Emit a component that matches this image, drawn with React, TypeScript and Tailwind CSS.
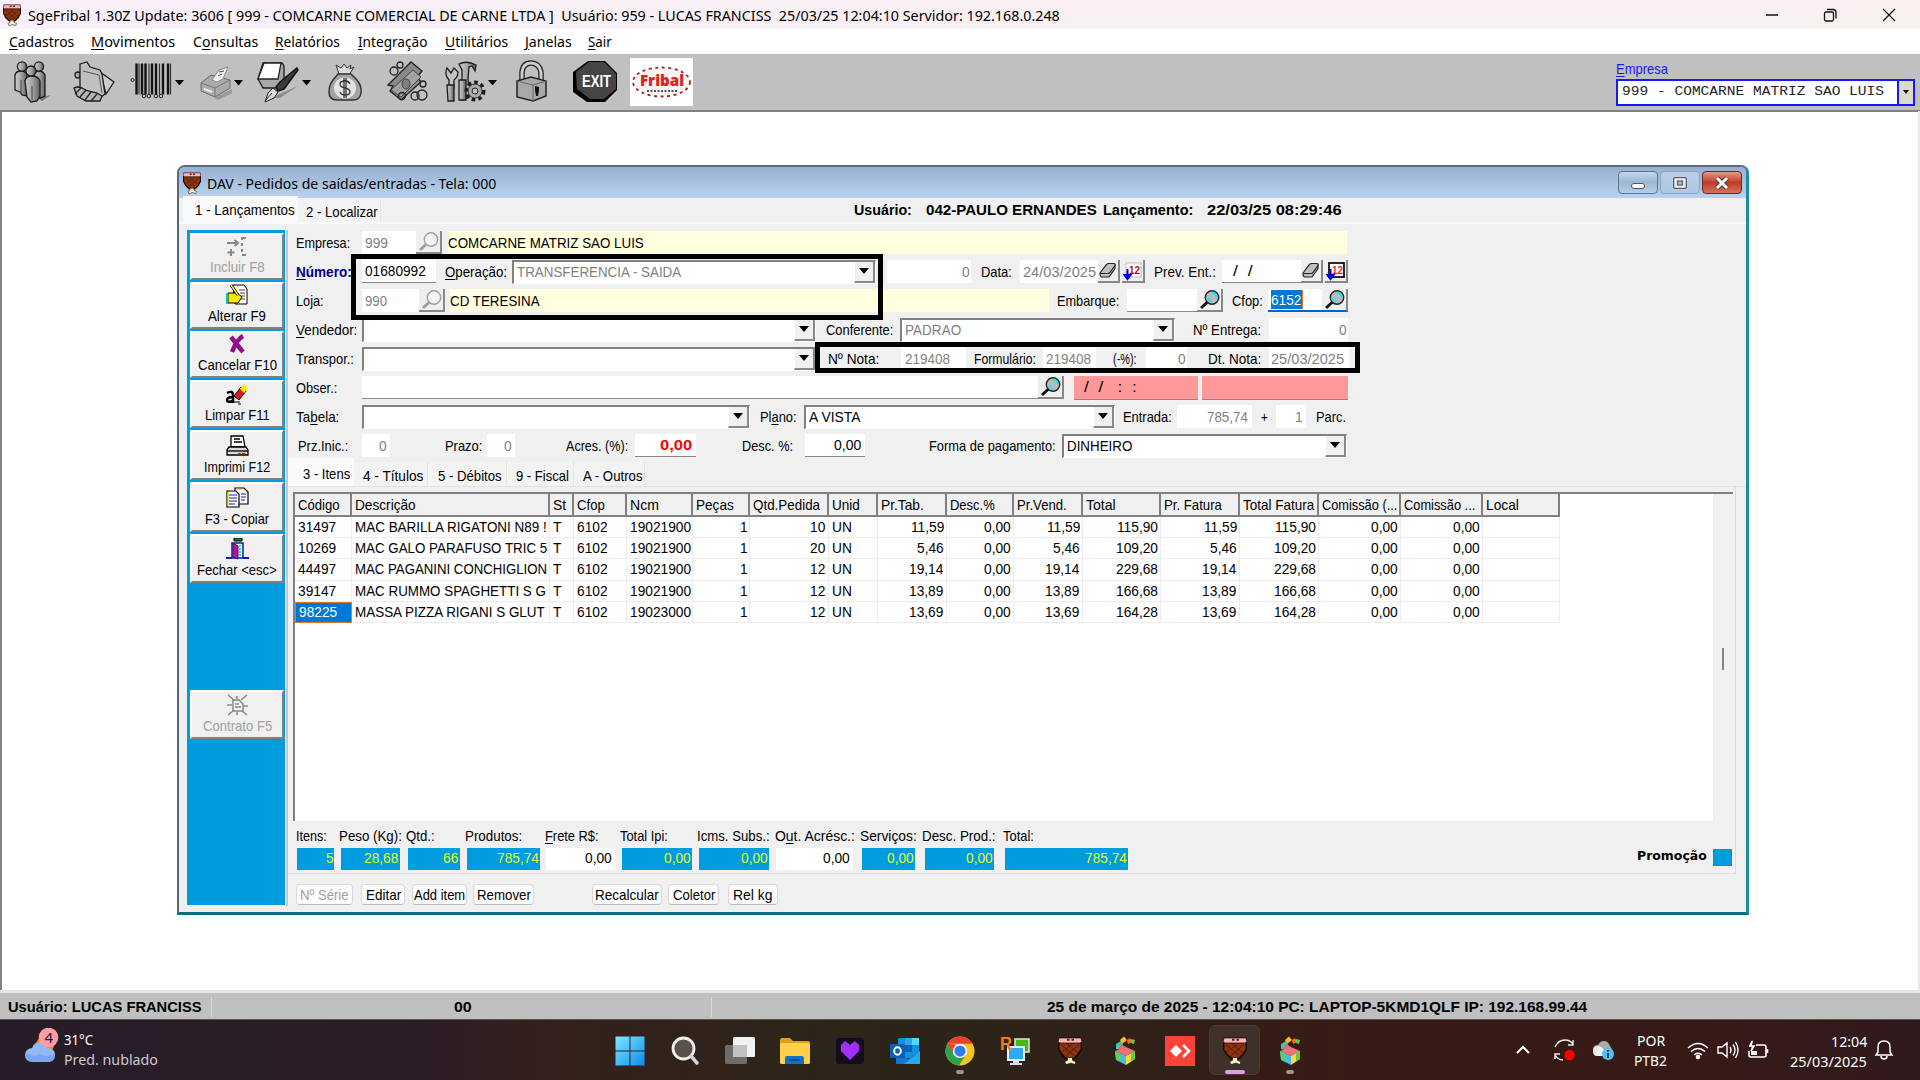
import React, { useLayoutEffect, useRef, useState } from 'react';

type TProps = { w?: number; k?: number; className?: string; children: React.ReactNode };

/** Text condensed horizontally to a target width, like the bitmap UI fonts. */
function T({ w, k = 0.915, className = '', children }: TProps) {
  const ref = useRef<HTMLSpanElement>(null);
  const [m, setM] = useState({ s: k, t: w });
  useLayoutEffect(() => {
    const nat = ref.current ? ref.current.offsetWidth : 0;
    if (nat > 0) {
      const target = w ?? nat * k;
      setM({ s: target / nat, t: target });
    }
  }, [w, k, children]);
  return (
    <span className={'inline-block shrink-0 whitespace-pre ' + className} style={{ width: m.t }}>
      <span ref={ref} className="inline-block origin-left" style={{ transform: `scaleX(${m.s})` }}>
        {children}
      </span>
    </span>
  );
}

const U = ({ children }: { children: React.ReactNode }) => <span className="underline underline-offset-2">{children}</span>;

const L = ({ w, className = '', children }: { w: number; className?: string; children: React.ReactNode }) => (
  <div className={'flex h-full items-center pt-px ' + className}>
    <T w={w}>{children}</T>
  </div>
);

function Field({ className = '', children }: { className?: string; children?: React.ReactNode }) {
  return <div className={'flex h-[23px] items-center bg-white ' + className}>{children}</div>;
}

function Arrow() {
  return (
    <svg width="10" height="6" viewBox="0 0 10 6">
      <path d="M0 0h10L5 6z" fill="#000" />
    </svg>
  );
}

function Combo({ className = '', children }: { className?: string; children?: React.ReactNode }) {
  return (
    <div className={'flex h-6 items-center border-t-2 border-l-2 border-t-[#808080] border-l-[#808080] border-r border-b border-r-white border-b-white bg-white pl-[3px] ' + className}>
      {children}
      <div className="ml-auto flex h-full w-[21px] items-center justify-center border-r-2 border-b-2 border-l border-[#888] border-l-white bg-[#f0f0f0]">
        <Arrow />
      </div>
    </div>
  );
}

function Lens({ off = false, className = '' }: { off?: boolean; className?: string }) {
  return (
    <div className={'flex h-[23px] w-[26px] items-center justify-center border-r-2 border-b-2 border-[#888] bg-[#efefef] ' + className}>
      <svg width="22" height="21" viewBox="0 0 22 21">
        <path d="M9.500 13L3 19" stroke={off ? '#a0a0a0' : '#111'} strokeWidth="3" />
        <circle cx="14" cy="8.500" r="6.700" fill={off ? '#f4f4f4' : '#b8bcbc'} stroke={off ? '#a0a0a0' : '#222'} strokeWidth="1.400" />
        {!off && <path d="M14 3.500a5 5 0 0 1 4.500 4.500M10 9l3 4" stroke="#00f0ff" strokeWidth="2" fill="none" />}
      </svg>
    </div>
  );
}

function Eraser() {
  return (
    <div className="flex h-[23px] w-[22px] items-center justify-center border-r-2 border-b-2 border-[#888] bg-[#efefef]">
      <svg width="18" height="17" viewBox="0 0 18 17">
        <path d="M1 11L7.500 2.500q1-1 2 -1h5q2.500 0 1.500 2.500v2.500l-6 8.500H3q-2 0-2-4z" fill="#c0c0c0" stroke="#222" strokeWidth="1.200" />
        <path d="M1.500 11.500h7.500q1.500 0 2-1l5-7" fill="none" stroke="#222" strokeWidth="1.200" />
      </svg>
    </div>
  );
}

function Cal({ hot = false }: { hot?: boolean }) {
  return (
    <div className="flex h-[23px] w-[23px] items-center justify-center border-r-2 border-b-2 border-[#888] bg-[#efefef]">
      <svg width="20" height="20" viewBox="0 0 20 20">
        <rect x="3" y="2" width="15" height="14" fill="#fff" stroke={hot ? '#111' : '#bbb'} strokeWidth={hot ? 1.8 : 1} />
        <text x="6" y="12.500" fontFamily="Liberation Sans" fontWeight="bold" fontSize="11" fill={hot ? '#f22' : '#a01818'} textLength="11" lengthAdjust="spacingAndGlyphs">12</text>
        <path d="M4.500 8v8M1.500 14h6l-3 4z" stroke="#0000d0" strokeWidth="2" fill="#0000d0" />
      </svg>
    </div>
  );
}

function Drumstick({ className = '' }: { className?: string }) {
  return (
    <svg className={className} viewBox="0 0 24 30" preserveAspectRatio="none">
      <path d="M0 4h24v9l-3 6-5 5H8l-5-5-3-6z" fill="#160804" />
      <path d="M1.500 6h21v7l-3 5-4.500 4.500H9L4.500 18l-3-5z" fill="#8c3412" />
      <path d="M3 8l13 12M8 6l12 11M21 8L8 20M16 6L4 16" stroke="#541a08" strokeWidth="1" />
      <path d="M1 1h22l1 4-2 1.500H2L0 5z" fill="#fbb5b5" stroke="#160804" strokeWidth=".8" />
      <path d="M9 3h2.500M13.500 3H16" stroke="#5a1818" strokeWidth="2" />
      <path d="M9.500 22h5v3l3.500 1.500-1 3-4-1.500-5 1.500-1.500-3L9.500 25z" fill="#fff3c8" stroke="#160804" strokeWidth=".7" />
    </svg>
  );
}

function Cubes() {
  return (
    <svg width="24" height="30" viewBox="0 0 24 30" preserveAspectRatio="none">
      <path d="M7 4l4-3.500 3 3.500-5 4z" fill="#f3c11b" />
      <path d="M14 4l3-2 2 4-4 2z" fill="#ff6a1a" />
      <path d="M18 3l4 1-1 4-3-1z" fill="#5acb3c" />
      <path d="M3 8l5-3 2 4-3 5-4-1z" fill="#3cc5b4" />
      <path d="M8 8l5 3-3 3-5-1z" fill="#f06a60" />
      <path d="M13 11l9 4-9 5-11-5z" fill="#ee7078" />
      <path d="M2 15l11 5v9L3 24z" fill="#4db8f0" />
      <path d="M2 15l6 3v7l-5-2z" fill="#5bd060" />
      <path d="M13 20l9-5v8l-9 6z" fill="#f7dc3e" />
      <path d="M18 17.500l4-2.500v8l-4 2.500z" fill="#62cc40" />
    </svg>
  );
}

const g = { fill: 'url(#steel)', stroke: '#1c1c1c', strokeWidth: 1.3 };

function Steel() {
  return (
    <defs>
      <linearGradient id="steel">
        <stop stopColor="#cfcfcf" />
        <stop offset=".5" stopColor="#a4a4a4" />
        <stop offset="1" stopColor="#5f5f5f" />
      </linearGradient>
    </defs>
  );
}

function TopIcon({ name }: { name: string }) {
  switch (name) {
    case 'people':
      return (
        <svg width="44" height="44" viewBox="0 0 44 44">
          <Steel />
          <path d="M28 38l13-3-9 6z" fill="#777" />
          <path d="M5 15q1-4 6-4t6 4v21l-5-1-2-3-5-2z" {...g} />
          <path d="M24 15q1-4 5-4t6 4v21l-5 2z" {...g} />
          <path d="M15 21q1-5 7-5t8 5v15l-3 5-6 1-4-5z" {...g} />
          <path d="M22 26v14M11 20v14" stroke="#444" />
          <circle cx="12" cy="6.500" r="4.600" {...g} />
          <circle cx="29" cy="6.500" r="4.600" {...g} />
          <circle cx="21" cy="11" r="5" {...g} />
        </svg>
      );
    case 'folder':
      return (
        <svg width="44" height="44" viewBox="0 0 44 44">
          <circle cx="6" cy="15" r="3" {...g} />
          <path d="M28 12l14 10-8 12z" {...g} fill="#ccc" />
          <path d="M8 4l7-2 3 5 10 3 2 4 3 20-4 3-21-6z" {...g} fill="#c0c0c0" />
          <path d="M11 11l16 4 3 18" fill="none" stroke="#555" />
          <path d="M2 28q4-2 8 0l6 3 9 2 5 3-2 5H14l-9-5z" {...g} fill="#b4b4b4" />
          <path d="M9 28l-6 6M14 30l-6 7M19 32l-6 8M25 34l-6 7" stroke="#222" strokeWidth="1.300" />
        </svg>
      );
    case 'barcode':
      return (
        <svg width="56" height="44" viewBox="0 0 56 44">
          <g transform="translate(1 0)">
            <path d="M5.500 3.500v31M11 3.500v31M14.500 3.500v31M21 3.500v31M25 3.500v31M32 3.500v31M37 3.500v31" stroke="#111" strokeWidth="2.400" />
            <path d="M8 3.500v31M18 3.500v31M28.500 3.500v31M39.500 3.500v31" stroke="#333" strokeWidth="1.200" />
            <g fill="#c0c0c0" stroke="#222">
              <circle cx="1.500" cy="20" r="1.500" />
              <circle cx="13" cy="36" r="1.800" />
              <circle cx="18" cy="36" r="1.800" />
              <circle cx="25" cy="36" r="1.800" />
              <circle cx="30" cy="36" r="1.800" />
            </g>
            <path d="M44 20h9l-4.500 5.500z" />
          </g>
        </svg>
      );
    case 'printer':
      return (
        <svg width="48" height="44" viewBox="0 0 48 44">
          <path d="M16 38l18-9v4l-14 7z" fill="#999" />
          <path d="M3 23l10-8 19 5v8L17 37 3 31z" fill="#ababab" stroke="#6a6a6a" />
          <path d="M3 23l14 5 15-8M17 28v9" fill="none" stroke="#777" />
          <path d="M6 29l8 3" stroke="#eee" strokeWidth="2" />
          <path d="M14 20l7-10 9-3-5 12-6 3z" fill="#eee" stroke="#888" />
          <path d="M21 12l5-1M20 16l4-2" stroke="#555" />
          <path d="M36 20h9l-4.500 5.500z" />
        </svg>
      );
    case 'pen':
      return (
        <svg width="56" height="44" viewBox="0 0 56 44">
          <path d="M14 38l28-12-18 12z" fill="#8c8c8c" />
          <path d="M2 19l5-16h19l2 3v14l-7 8H7z" fill="#a8a8a8" stroke="#1c1c1c" strokeWidth="1.300" />
          <path d="M2 19L8 3h17l-3 16z" fill="#fff" stroke="#222" strokeWidth="1.300" />
          <path d="M41 8l1 2-14 19-6 2-2-4 4-5z" fill="#3a3a3a" stroke="#111" strokeWidth="1.500" />
          <path d="M17 28l5 4-4 6-9 4 3-9z" fill="#ddd" stroke="#222" />
          <path d="M9 41l7-8" stroke="#222" />
          <path d="M46 20h9l-4.500 5.500z" />
        </svg>
      );
    case 'bag':
      return (
        <svg width="44" height="44" viewBox="0 0 44 44">
          <path d="M15 14L12 5l5 3 3-4 3 4 4-3-1 4 4-2-5 8z" fill="#ddd" stroke="#333" />
          <path d="M14 14h13l6 6q5 6 4 13-1 7-8 7H13q-8 0-8-8 0-7 4-12z" fill="#a4a4a4" stroke="#333" strokeWidth="1.500" />
          <ellipse cx="21" cy="28" rx="11" ry="10.500" fill="#e4e4e4" />
          <path d="M26 24q-1-3-5-3-5 0-5 3t5 4q5 1 5 4t-5 3q-4 0-5-3M20 18v20M22 18v20" fill="none" stroke="#333" strokeWidth="1.300" />
        </svg>
      );
    case 'cash':
      return (
        <svg width="44" height="44" viewBox="0 0 44 44">
          <path d="M2 25L25 2l11 9-5 6 4 5-20 18-11-9 3-5z" fill="#8a8a8a" stroke="#222" strokeWidth="1.300" />
          <path d="M5 30l22-20 8 7-20 20z" fill="#a4a4a4" stroke="#444" />
          <path d="M10 31L29 14" stroke="#777" strokeDasharray="2 2" />
          <ellipse cx="20" cy="24" rx="4" ry="5" fill="#808080" stroke="#444" />
          <g fill="none" stroke="#222" strokeWidth="1.300">
            <circle cx="8" cy="11" r="4" />
            <circle cx="14" cy="5" r="3" />
            <circle cx="37" cy="24" r="3" />
            <circle cx="16" cy="36" r="3.500" />
            <circle cx="29" cy="36" r="4" />
            <circle cx="36" cy="35" r="5" />
          </g>
        </svg>
      );
    case 'tools':
      return (
        <svg width="56" height="44" viewBox="0 0 56 44">
          <path d="M15 4q8-4 17 1l-1 6-3-5-3 1-1 12 2 18-8 3V10z" {...g} />
          <path d="M15 20h7v20h-7z" {...g} />
          <path d="M3 8l4 5 3-5 4 4q0 5-4 8v8H5v-8Q0 15 3 8z" {...g} fill="#c4c4c4" />
          <path d="M3 25h7v16H4z" {...g} />
          <circle cx="31" cy="31" r="8.500" fill="#bbb" stroke="#1c1c1c" strokeWidth="4" strokeDasharray="3.500 3" />
          <circle cx="31" cy="31" r="7" fill="#aaa" stroke="#333" />
          <circle cx="31" cy="31" r="3" fill="#c0c0c0" stroke="#222" />
          <path d="M44 20h9l-4.500 5.500z" />
        </svg>
      );
    case 'lock':
      return (
        <svg width="44" height="44" viewBox="0 0 44 44">
          <path d="M10 21v-9Q11 3 19 3t10 9v10" fill="none" stroke="#222" strokeWidth="5.500" />
          <path d="M10 21v-9Q11 3 19 3t10 9v10" fill="none" stroke="#ccc" strokeWidth="3" />
          <path d="M5 21l14-4 15 4v15l-13 5-16-4z" fill="#a8a8a8" stroke="#222" strokeWidth="1.500" />
          <path d="M5 21l16 4 13-4M21 25v16" fill="none" stroke="#666" />
          <path d="M23 26l4 1v3l-1 6h-2l-1-6z" fill="#111" />
        </svg>
      );
    case 'exit':
      return (
        <svg className="overflow-visible" width="50" height="44" viewBox="0 0 50 44">
          <path d="M3 12L18 1h17l12 12v17L35 42H17L3 32z" fill="#000" />
          <path d="M6 12L19 2h15l12 12v15L34 39H20L7 29z" fill="#454545" />
          <text x="12" y="27" fontFamily="Liberation Sans" fontWeight="bold" fontSize="17" fill="#fff" textLength="29" lengthAdjust="spacingAndGlyphs">EXIT</text>
        </svg>
      );
    default:
      return (
        <svg width="63" height="48" viewBox="0 0 63 48">
          <rect width="63" height="48" fill="#fff" />
          <ellipse cx="31.500" cy="24" rx="28.500" ry="14.500" fill="#fbf4f2" stroke="#9a2a22" strokeWidth="1.800" strokeDasharray="3 3.500" />
          <text x="10" y="28" fontFamily="Open Sans" fontWeight="800" fontSize="16" fill="#e02020" textLength="44" lengthAdjust="spacingAndGlyphs">Fribal</text>
          <path d="M17 33h30" stroke="#222" strokeWidth="1.300" strokeDasharray="2 1.500" />
        </svg>
      );
  }
}

function SideIcon({ name }: { name: string }) {
  const c = '#888';
  return (
    <svg width="24" height="22" viewBox="0 0 24 22">
      {name === 'incluir' && (
        <g stroke={c} strokeWidth="2" fill="none">
          <path d="M2 8h11M9.500 5l3.500 3-3.500 3M6 14v7M2.500 17.500h7" />
          <path d="M17 2v3M17 8v3M17 14v3M17 20h4M17 3h4" />
        </g>
      )}
      {name === 'alterar' && (
        <g>
          <path d="M8 1h11l3 4v15H10z" fill="#fff" stroke="#000" />
          <path d="M14 6h6M15 9h5M16 12h4M16 15h4" stroke="#444" />
          <path d="M3 9h9l5 4-4 6H3z" fill="#ffe800" stroke="#000" />
          <path d="M1 9h2v11H1z" fill="#0cc" />
          <path d="M6 1l7 10" stroke="#000" strokeWidth="3" />
          <path d="M6 1l7 10" stroke="#ff0" strokeWidth="1.400" />
        </g>
      )}
      {name === 'cancelar' && <path d="M6 4l12 15M18 3Q12 6 7 19" stroke="#90108c" strokeWidth="4.500" fill="none" />}
      {name === 'limpar' && (
        <g>
          <path d="M2 10q6-3 6 2v8M8 14q-6 0-6 3t6 1" fill="none" stroke="#000" strokeWidth="2.500" />
          <path d="M9 19h6M13 21h3" stroke="#000" />
          <path d="M9 13l7-9 5 4-7 9z" fill="#e01818" stroke="#000" />
          <path d="M15 6l4-5 4 4-4 5z" fill="#ffe600" />
        </g>
      )}
      {name === 'imprimir' && (
        <g stroke="#000" strokeWidth="1.300">
          <path d="M6 1h12l2 11H6z" fill="#fff" />
          <path d="M9 4h6M9 7h8" />
          <path d="M4 12h17l2 3v5H2v-5z" fill="#d8d8d8" />
          <path d="M2 16h21" />
          <path d="M13 18.500h3" stroke="#0a0" />
          <path d="M17 18.500h3" stroke="#e00" />
        </g>
      )}
      {name === 'copiar' && (
        <g stroke="#000" strokeWidth="1.200">
          <path d="M10 1h9l4 4v12H10z" fill="#fff" />
          <path d="M2 4h9l3 3v13H2z" fill="#fff" />
          <path d="M4 8h8M4 11h8M4 14h8M4 17h6M16 7h5M16 10h5M16 13h4" stroke="#1818a0" />
          <path d="M3 5v14M11 2l6 1" stroke="#e8d800" />
        </g>
      )}
      {name === 'fechar' && (
        <g>
          <path d="M9 0h8v3H9z" fill="#0a8a0a" stroke="#000" />
          <path d="M7 5h11v15H7z" fill="#eaffff" stroke="#1818a0" strokeWidth="1.500" />
          <path d="M8 5l5 3v13l-5-2z" fill="#c0108c" stroke="#202080" />
          <path d="M1 20h6M18 20h6" stroke="#1818a0" strokeWidth="2" />
          <path d="M15 7v11" stroke="#30e0e8" strokeWidth="2" strokeDasharray="2 1" />
        </g>
      )}
      {name === 'contrato' && (
        <g stroke={c} strokeWidth="1.500" fill="none">
          <path d="M8 6h6l4 4v7H8zM10 10h4M10 13h6" />
          <path d="M3 1l6 5M22 1l-6 5M2 11h5M18 12h5M3 21l5-4M22 21l-5-4M12 2v3M12 18v3" />
        </g>
      )}
    </svg>
  );
}

function SideButton({ icon, label, w, off = false, className = 'h-[49px]' }: { icon: string; label: string; w: number; off?: boolean; className?: string }) {
  return (
    <div className={'flex w-[94px] shrink-0 flex-col items-center justify-end border-t-2 border-l-2 border-r-2 border-b-2 border-t-white border-l-white border-r-[#808080] border-b-[#808080] bg-[#f0f0f0] ' + className + (off ? ' text-[#a0a0a0]' : '')}>
      <SideIcon name={icon} />
      <T w={w} className="h-[21px] leading-[19px]">{label}</T>
    </div>
  );
}

const columns: [string, number][] = [
  ['Código', 42], ['Descrição', 61], ['St', 13], ['Cfop', 28], ['Ncm', 29], ['Peças', 38], ['Qtd.Pedida', 67], ['Unid', 28],
  ['Pr.Tab.', 43], ['Desc.%', 45], ['Pr.Vend.', 50], ['Total', 30], ['Pr. Fatura', 58], ['Total Fatura', 71], ['Comissão (...', 75], ['Comissão ...', 71], ['Local', 33],
];
const rows = [
  ['31497', 'MAC BARILLA RIGATONI N89 !', 'T', '6102', '19021900', '1', '10', 'UN', '11,59', '0,00', '11,59', '115,90', '11,59', '115,90', '0,00', '0,00', ''],
  ['10269', 'MAC GALO PARAFUSO TRIC 5', 'T', '6102', '19021900', '1', '20', 'UN', '5,46', '0,00', '5,46', '109,20', '5,46', '109,20', '0,00', '0,00', ''],
  ['44497', 'MAC PAGANINI CONCHIGLION', 'T', '6102', '19021900', '1', '12', 'UN', '19,14', '0,00', '19,14', '229,68', '19,14', '229,68', '0,00', '0,00', ''],
  ['39147', 'MAC RUMMO SPAGHETTI S G', 'T', '6102', '19021900', '1', '12', 'UN', '13,89', '0,00', '13,89', '166,68', '13,89', '166,68', '0,00', '0,00', ''],
  ['98225', 'MASSA PIZZA RIGANI S GLUT', 'T', '6102', '19023000', '1', '12', 'UN', '13,69', '0,00', '13,69', '164,28', '13,69', '164,28', '0,00', '0,00', ''],
];
const descWidths = [192, 192, 192, 191, 190];
const grid = 'grid grid-cols-[57px_198px_24px_53px_66px_57px_79px_49px_69px_67px_69px_78px_79px_79px_82px_82px_77px]';

function Table() {
  return (
    <div className="ml-[5px] flex h-[329px] w-[1440px] border-t-2 border-l-2 border-[#808080] bg-white">
      <div className="w-[1418px]">
        <div className={grid + ' h-[23px]'}>
          {columns.map(([c, w], i) => (
            <div key={i} className="flex items-center overflow-hidden border-r-2 border-b-2 border-[#808080] bg-[#f0f0f0] pl-[3px]">
              <T w={w}>{c}</T>
            </div>
          ))}
        </div>
        {rows.map((r, j) => (
          <div key={j} className={grid + ' h-[21.2px]'}>
            {r.map((v, i) => {
              const num = i === 5 || i === 6 || (i > 7 && i < 16);
              const sel = j === 4 && i === 0;
              return (
                <div key={i} className={'flex items-center overflow-hidden border-r border-b ' + (num ? 'justify-end pr-0.5 ' : 'pl-[3px] ') + (sel ? 'border border-[#e07828] bg-[#0078d7] pl-0.5 text-white' : 'border-[#ececec]')}>
                  {v && <T w={i === 1 ? descWidths[j] : undefined}>{v}</T>}
                </div>
              );
            })}
          </div>
        ))}
      </div>
      <div className="w-5 bg-[#f0f0f0] pt-[154px] pl-[9px]">
        <div className="h-[22px] w-0.5 bg-[#858585]" />
      </div>
    </div>
  );
}

function Total({ label, w, value, plain = false, cell, box }: { label: React.ReactNode; w: number; value: string; plain?: boolean; cell: string; box: string }) {
  return (
    <div className={'shrink-0 ' + cell}>
      <div className="flex h-6 items-center"><T w={w}>{label}</T></div>
      <div className={'flex h-[22px] items-center justify-end pb-0.5 ' + box + (plain ? ' bg-white pr-[3px]' : ' bg-[#009ce0] pr-px text-[#e4ff1c]')}>
        <T>{value}</T>
      </div>
    </div>
  );
}

function PushButton({ w, className, children }: { w: number; className: string; children: string }) {
  return (
    <div className={'flex h-[21px] shrink-0 items-center justify-center overflow-hidden rounded border border-[#d8d8d8] border-b-[#bbb] bg-[#fdfdfd] ' + className}>
      <T w={w}>{children}</T>
    </div>
  );
}

function Tab({ w, className, children }: { w: number; className: string; children: string }) {
  return (
    <div className={'flex shrink-0 items-center justify-end ' + className}>
      <T w={w}>{children}</T>
    </div>
  );
}

function Form() {
  return (
    <div className="relative flex h-[229px] w-[1080px] flex-col gap-1 pl-2">
      <div className="grid h-[25px] grid-cols-[66px_54px_32px_899px] items-center">
        <L w={54}>Empresa:</L>
        <Field className="pl-[3px] text-[#808080]"><T w={23}>999</T></Field>
        <Lens off />
        <div className="flex h-[23px] items-center bg-[#ffffe0]"><T w={196}>COMCARNE MATRIZ SAO LUIS</T></div>
      </div>
      <div className="grid h-[25px] grid-cols-[66px_83px_67px_375px_84px_49px_78px_24px_32px_68px_79px_24px_23px] items-center">
        <L w={56} className="font-bold text-[#000080]"><U>N</U>úmero:</L>
        <Field className="mr-[9px] border-b border-[#888] pl-[3px]"><T w={61}>01680992</T></Field>
        <L w={62}><U>O</U>peração:</L>
        <Combo className="mr-[11px] text-[#808080]"><T w={164}>TRANSFERENCIA - SAIDA</T></Combo>
        <Field className="justify-end pr-0.5 text-[#808080]"><T>0</T></Field>
        <L w={31} className="pl-2.5">Data:</L>
        <Field className="pl-[3px] text-[#808080]"><T w={73}>24/03/2025</T></Field>
        <Eraser />
        <Cal />
        <L w={62}>Prev. Ent.:</L>
        <Field className="border-b border-[#888] pl-[11px]"><T w={20}>/  /</T></Field>
        <Eraser />
        <Cal hot />
      </div>
      <div className="grid h-[25px] grid-cols-[66px_57px_31px_599px_78px_70px_35px_36px_54px_26px] items-center">
        <L w={28}>Loja:</L>
        <Field className="pl-[3px] text-[#808080]"><T w={22}>990</T></Field>
        <Lens off />
        <div className="flex h-[23px] items-center bg-[#ffffe0]"><T w={90}>CD TERESINA</T></div>
        <L w={62} className="pl-2">Embarque:</L>
        <Field className="border-b border-[#888]" />
        <Lens />
        <L w={31}>Cfop:</L>
        <Field className="border-b-2 border-[#0067c0] pl-[3px]"><div className="flex h-[19px] w-[32px] items-center border-r border-[#e07828] bg-[#0078d7] text-white"><T w={30}>6152</T></div></Field>
        <Lens className="border-b-[#0067c0]" />
      </div>
      <div className="grid h-[25px] grid-cols-[66px_464px_74px_293px_76px_79px] items-center">
        <L w={61}><U>V</U>endedor:</L>
        <Combo className="mr-[10px]" />
        <L w={67}>Conferente:</L>
        <Combo className="mr-[18px] text-[#808080]"><T w={56}>PADRAO</T></Combo>
        <L w={68}>Nº Entrega:</L>
        <Field className="justify-end pr-0.5 text-[#808080]"><T>0</T></Field>
      </div>
      <div className="grid h-[25px] grid-cols-[66px_466px_73px_73px_69px_70px_33px_62px_61px_80px] items-center">
        <L w={58}>Transpor.:</L>
        <Combo className="mr-3" />
        <L w={51}>Nº Nota:</L>
        <Field className="mr-2 pl-1 text-[#808080]"><T w={45}>219408</T></Field>
        <L w={62}>Formulário:</L>
        <Field className="mr-[17px] pl-[3px] text-[#808080]"><T w={45}>219408</T></Field>
        <L w={24}>(-%):</L>
        <Field className="mr-[21px] justify-end pr-0.5 text-[#808080]"><T>0</T></Field>
        <L w={53}>Dt. Nota:</L>
        <Field className="pl-0.5 text-[#808080]"><T w={73}>25/03/2025</T></Field>
      </div>
      <div className="grid h-[25px] grid-cols-[66px_676px_36px_128px_146px] items-center">
        <L w={41}>Obser.:</L>
        <Field className="border-b border-[#888]" />
        <Lens />
        <div className="mr-1 flex h-6 items-center border-b border-[#888] bg-[#ff9898] pl-2.5"><T w={53}>/  /   :  :</T></div>
        <div className="h-6 border-b border-[#888] bg-[#ff9898]" />
      </div>
      <div className="grid h-[25px] grid-cols-[66px_398px_44px_319px_54px_84px_15px_40px_40px] items-center">
        <L w={43}>Ta<U>b</U>ela:</L>
        <Combo className="mr-[10px]" />
        <L w={37}>Pl<U>a</U>no:</L>
        <Combo className="mr-2"><T w={52}>A VISTA</T></Combo>
        <L w={49}>Entrada:</L>
        <Field className="mr-[9px] justify-end pr-1 text-[#808080]"><T w={41}>785,74</T></Field>
        <L w={7}>+</L>
        <Field className="mr-2.5 justify-end pr-1 text-[#808080]"><T>1</T></Field>
        <L w={30}>Parc.</L>
      </div>
      <div className="grid h-[25px] grid-cols-[66px_83px_42px_79px_69px_107px_63px_124px_133px_285px] items-center">
        <L w={50} className="pl-0.5">Prz.Inic.:</L>
        <Field className="mr-[55px] justify-end pr-1 text-[#808080]"><T>0</T></Field>
        <L w={37}>Prazo:</L>
        <Field className="mr-[51px] justify-end pr-1 text-[#808080]"><T>0</T></Field>
        <L w={62}>Acres. (%):</L>
        <Field className="mr-[46px] justify-end border-b border-[#888] pr-1 font-bold text-[#f00]"><T w={32}>0,00</T></Field>
        <L w={51}>Desc. %:</L>
        <Field className="mr-16 justify-end border-b border-[#888] pr-1"><T w={27}>0,00</T></Field>
        <L w={127}>Forma de pagamento:</L>
        <Combo><T w={65}>DINHEIRO</T></Combo>
      </div>
      <div className="absolute top-6 left-[63px] h-[66px] w-[532px] border-5 border-black" />
      <div className="absolute top-[112px] left-[527px] h-[31px] w-[545px] border-5 border-black" />
    </div>
  );
}

function ChildWindow() {
  return (
    <div className="mt-[54px] ml-[175px] flex h-[750px] w-[1572px] flex-col overflow-hidden rounded-t-lg border-t-2 border-r-3 border-b-3 border-l-2 border-t-[#5c6c7c] border-r-[#1c8ca4] border-b-[#0c6c80] border-l-[#566878] bg-[#f0f0f0]">
      <div className="flex h-[31px] shrink-0 items-center bg-gradient-to-b from-[#97b0d0] to-[#b9d3ee] pl-1">
        <Drumstick className="h-[22px] w-[18px]" />
        <T w={289} className="ml-1.5 font-['Noto_Sans']">DAV - Pedidos de saídas/entradas - Tela: 000</T>
        <div className="ml-auto flex gap-0.5 pr-1">
          <div className="flex h-[23px] w-10 items-center justify-center rounded-sm border border-[#5c728c] bg-gradient-to-b from-[#c5d7ea] via-[#9cb7d3] to-[#b5cfe8] pt-1.5">
            <div className="h-1.5 w-3.5 rounded-sm border border-[#555] bg-white" />
          </div>
          <div className="flex h-[23px] w-10 items-center justify-center rounded-sm border border-[#8aa2be] bg-gradient-to-b from-[#b9cfe6] to-[#adc8e4]">
            <svg width="14" height="12" viewBox="0 0 14 12">
              <rect x=".7" y=".7" width="12.600" height="10.600" rx="1" fill="#eee" stroke="#5a5f6a" strokeWidth="1.300" />
              <rect x="4.500" y="4" width="5" height="4" fill="#9cb7d3" stroke="#5a5f6a" strokeWidth="1.200" />
            </svg>
          </div>
          <div className="flex h-[23px] w-10 items-center justify-center rounded-sm border border-[#702820] bg-gradient-to-b from-[#e29a8c] via-[#bf3a22] to-[#d27460]">
            <svg width="16" height="14" viewBox="0 0 16 14">
              <path d="M3 2l10 10M13 2L3 12" stroke="#5a3838" strokeWidth="5" />
              <path d="M3 2l10 10M13 2L3 12" stroke="#fff" strokeWidth="3" />
            </svg>
          </div>
        </div>
      </div>
      <div className="flex h-[26px] shrink-0 items-end border-b-2 border-[#fafafa] pl-1">
        <Tab w={100} className="h-[26px] w-[115px] bg-[#fafafa] pt-px pr-[3px]">1 - Lançamentos</Tab>
        <Tab w={72} className="h-[22px] w-[83px] border-r border-[#e4e4e4] bg-[#f3f3f3] pt-0.5 pr-0.5">2 - Localizar</Tab>
        <div className="ml-[473px] flex h-full items-center font-bold">
          <T w={58} className="mr-3.5">Usuário:</T>
          <T w={171} className="mr-1.5">042-PAULO ERNANDES</T>
          <T w={90} className="mr-3.5">Lançamento:</T>
          <T w={135}>22/03/25 08:29:46</T>
        </div>
      </div>
      <div className="flex min-h-0 flex-1 pt-[6px] pl-2">
        <div className="flex h-[675px] w-[98px] shrink-0 flex-col items-start gap-0.5 bg-[#009ce0] pt-[3px] pl-[3px]">
          <SideButton icon="incluir" label="Incluir F8" w={55} off className="h-[47px]" />
          <SideButton icon="alterar" label="Alterar F9" w={58} className="h-[47px]" />
          <SideButton icon="cancelar" label="Cancelar F10" w={79} className="h-[47px]" />
          <SideButton icon="limpar" label="Limpar F11" w={65} className="h-[48px]" />
          <SideButton icon="imprimir" label="Imprimi F12" w={66} className="h-[50px]" />
          <SideButton icon="copiar" label="F3 - Copiar" w={64} className="h-[50px]" />
          <SideButton icon="fechar" label="Fechar <esc>" w={80} />
          <SideButton icon="contrato" label="Contrato F5" w={69} off className="mt-[105px] h-[49px]" />
        </div>
        <div className="ml-px flex h-[676px] min-w-0 flex-1 flex-col border-l-2 border-[#c8c8c8]">
          <Form />
          <div className="flex h-7 shrink-0 items-end border-b border-[#e2e2e2]">
            <Tab w={47} className="h-7 w-[66px] bg-[#fafafa] pt-[3px] pr-1">3 - Itens</Tab>
            <Tab w={60} className="h-[24px] w-[74px] border-r border-[#e4e4e4] bg-[#f3f3f3] pt-1 pr-1">4 - Títulos</Tab>
            <Tab w={64} className="h-[24px] w-[79px] border-r border-[#e4e4e4] bg-[#f3f3f3] pt-1 pr-1">5 - Débitos</Tab>
            <Tab w={53} className="h-[24px] w-[67px] border-r border-[#e4e4e4] bg-[#f3f3f3] pt-1 pr-1">9 - Fiscal</Tab>
            <Tab w={60} className="h-[24px] w-[71px] border-r border-[#e4e4e4] bg-[#f3f3f3] pt-1 pr-px">A - Outros</Tab>
          </div>
          <div className="w-[1448px] border-r border-b border-[#dadada] pt-[5px] pb-[3px]">
            <Table />
            <div className="flex pt-[3px] pl-2">
              <Total label="Itens:" w={31} value="5" cell="w-[43px]" box="ml-px w-[37px]" />
              <Total label="Peso (Kg):" w={63} value="28,68" cell="w-[67px]" box="ml-0.5 w-[59px]" />
              <Total label="Qtd.:" w={29} value="66" cell="w-[59px]" box="ml-0.5 w-[52px]" />
              <Total label="Produtos:" w={57} value="785,74" cell="w-20" box="ml-0.5 w-[73px]" />
              <Total label={<><U>F</U>rete R$:</>} w={54} value="0,00" plain cell="w-[75px]" box="ml-px w-[69px]" />
              <Total label="Total Ipi:" w={48} value="0,00" cell="w-[77px]" box="ml-0.5 w-[70px]" />
              <Total label="Icms. Subs.:" w={73} value="0,00" cell="w-[78px]" box="ml-0.5 w-[70px]" />
              <Total label={<>O<U>u</U>t. Acrésc.:</>} w={80} value="0,00" plain cell="w-[85px]" box="ml-px w-[77px]" />
              <Total label="Serviços:" w={57} value="0,00" cell="w-[62px]" box="ml-0.5 w-[53px]" />
              <Total label="Desc. Prod.:" w={74} value="0,00" cell="w-[81px]" box="ml-[3px] w-[69px]" />
              <Total label="Total:" w={31} value="785,74" cell="w-[124px]" box="w-[123px] ml-0.5" />
              <div className="mr-[3px] ml-auto flex items-end gap-1.5 pb-1">
                <T w={70} className="font-['DejaVu_Sans'] text-[13px] font-bold">Promoção</T>
                <div className="h-[17px] w-[19px] border border-[#707070] bg-[#009ce0]" />
              </div>
            </div>
          </div>
          <div className="flex pt-[10px] pl-2">
            <PushButton w={49} className="mr-2 w-[57px] text-[#a0a0a0]">Nº Série</PushButton>
            <PushButton w={35} className="mr-[7px] w-[44px]">Editar</PushButton>
            <PushButton w={51} className="mr-1.5 w-[55px]">Add item</PushButton>
            <PushButton w={54} className="mr-[58px] w-[61px]">Remover</PushButton>
            <PushButton w={64} className="mr-1.5 w-[70px]">Recalcular</PushButton>
            <PushButton w={42} className="mr-[9px] w-[51px]">Coletor</PushButton>
            <PushButton w={40} className="w-[50px]">Rel kg</PushButton>
          </div>
        </div>
      </div>
    </div>
  );
}

function TaskIcon({ name }: { name: string }) {
  if (name === 'drum') return <Drumstick className="h-7 w-6" />;
  if (name === 'cubes') return <Cubes />;
  return (
    <svg className="overflow-visible" width="30" height="30" viewBox="0 0 30 30">
      {name === 'win' && <path d="M0.500 0.500h14v14h-14zM15.500 0.500h14v14h-14zM.5 15.500h14v14h-14zM15.500 15.500h14v14h-14z" fill="url(#wg)" />}
      {name === 'win' && (
        <defs>
          <linearGradient id="wg" x2="1" y2="1"><stop stopColor="#7fe8ff" /><stop offset="1" stopColor="#0a8cf0" /></linearGradient>
        </defs>
      )}
      {name === 'search' && (
        <g fill="none" strokeLinecap="round">
          <circle cx="13.500" cy="12.500" r="10.500" stroke="#f0f0f0" strokeWidth="2.800" fill="#5a5248" />
          <path d="M21 20l6 7" stroke="#d4d4d4" strokeWidth="3.500" />
        </g>
      )}
      {name === 'task' && (
        <g>
          <rect x="0" y="9" width="22" height="19" rx="1.500" fill="#6c6c6a" />
          <rect x="8" y="1" width="22" height="20" rx="1.500" fill="#f2f2f2" />
          <path d="M8 9h14v12H8z" fill="#c2c2c2" />
        </g>
      )}
      {name === 'files' && (
        <g>
          <path d="M0 4q0-2 2-2h8l3 3h15q2 0 2 2v6H0z" fill="#e2a010" />
          <rect y="7" width="30" height="21" rx="1.500" fill="#ffd04a" />
          <path d="M5 28v-6q0-2 2-2h15q2 0 2 2v6z" fill="#1272c4" />
          <path d="M9 24h11" stroke="#0a4c90" strokeWidth="1.500" />
        </g>
      )}
      {name === 'heart' && (
        <g>
          <rect x="1" y="2" width="28" height="26" rx="3" fill="#150c20" />
          <path d="M15 24L6 15V9l4-4 5 4 5-4 4 4v6z" fill="#a030ff" />
        </g>
      )}
      {name === 'outlook' && (
        <g>
          <rect x="8" y="2" width="21" height="20" rx="1.500" fill="#1490df" />
          <path d="M15 2h7v7h-7z" fill="#28a8ea" /><path d="M22 2h7v7h-7z" fill="#50d9ff" /><path d="M15 9h7v7h-7z" fill="#0364b8" />
          <path d="M6 15l12 8 12-8v12q0 1-1 1H7q-1 0-1-1z" fill="#1078d4" />
          <path d="M30 15L14 28h15q1 0 1-1z" fill="#28a8ea" />
          <rect x="0" y="8" width="15" height="14" rx="1" fill="#0a60b4" />
          <ellipse cx="7.500" cy="15" rx="3.300" ry="3.700" fill="none" stroke="#fff" strokeWidth="2" />
        </g>
      )}
      {name === 'chrome' && (
        <g>
          <circle cx="15" cy="15" r="14.500" fill="#fcc31e" />
          <path d="M2.500 7.700A14.500 14.500 0 0 1 27.500 7.700H15z" fill="#e8402c" />
          <path d="M2.500 7.700A14.500 14.500 0 0 0 14 29.500l7-11-12-1z" fill="#2ba24c" />
          <path d="M2.500 7.700L9 18l3-9z" fill="#e8402c" />
          <circle cx="15" cy="15" r="7.200" fill="#fff" />
          <circle cx="15" cy="15" r="5.600" fill="#2f7df0" />
        </g>
      )}
      {name === 'remote' && (
        <g>
          <rect x="15" y="3" width="14" height="13" fill="#46b814" stroke="#e4e4e4" strokeWidth="1.500" />
          <rect x="8" y="11" width="16" height="13" fill="#2fa8f4" stroke="#eee" strokeWidth="2" />
          <path d="M13 25h6v2h3v2H10v-2h3z" fill="#ddd" />
          <text x="0" y="14" fontFamily="Liberation Sans" fontWeight="bold" fontSize="18" fill="#f47a1c" textLength="12" lengthAdjust="spacingAndGlyphs">R</text>
        </g>
      )}
      {name === 'any' && (
        <g>
          <rect width="30" height="30" fill="#fa4238" />
          <path d="M11 9l6 6-6 6-6-6z" fill="#fff" />
          <path d="M16 9l6 6-6 6" transform="translate(2 0)" fill="none" stroke="#fff" strokeWidth="2.500" />
        </g>
      )}
    </svg>
  );
}

const tasks = ['win', 'search', 'task', 'files', 'heart', 'outlook', 'chrome', 'remote', 'drum', 'cubes', 'any', 'drum', 'cubes'];

function Taskbar() {
  return (
    <div className="flex h-15 items-stretch bg-[linear-gradient(90deg,#261c27_0px,#2b1d27_420px,#34201c_540px,#2c2519_850px,#302018_1150px,#381b14_1350px,#371a17_1700px,#30191c_1920px)] font-['Noto_Sans'] text-white">
      <div className="flex w-[602px] items-start pt-2 pl-6">
        <svg width="36" height="42" viewBox="0 0 36 42">
          <circle cx="21" cy="17" r="9" fill="#f08a10" />
          <path d="M8 34q-7-1-7-7t7-7q2-6 8-6t7 6q8 0 8 7t-7 7z" fill="#93b8f4" />
          <path d="M5 33q-5-3-3-8 8 5 14 1 7 4 14 0 1 6-5 8H9z" fill="#7fa4ee" />
          <circle cx="24.500" cy="9.500" r="9.800" fill="#ff9ba2" />
          <text x="20.500" y="15" fontFamily="Noto Sans" fontSize="15" fill="#222">4</text>
        </svg>
        <div className="ml-1 flex flex-col pt-px leading-5">
          <T w={29} className="h-5 text-[15px]">31°C</T>
          <T w={94} className="text-[15px] text-[#cfcacf]">Pred. nublado</T>
        </div>
      </div>
      {tasks.map((t, i) => (
        <div key={i} className="relative flex w-[55px] items-center justify-center pt-px pl-px">
          {i === 11 && <div className="absolute inset-x-0.5 inset-y-[5px] rounded-md border border-[#4c3a34] bg-[#40302a]" />}
          <div className="relative flex"><TaskIcon name={t} /></div>
          {(i === 6 || i === 12) && <div className="absolute bottom-1.5 h-1 w-2 rounded-full bg-[#9c9490]" />}
          {i === 11 && <div className="absolute bottom-1.5 h-1 w-5 rounded-full bg-[#e0a0e6]" />}
        </div>
      ))}
      <div className="ml-auto grid w-[411px] grid-cols-[42px_39px_38px_59px_30px_30px_38px_84px_30px] items-center">
        <svg className="ml-1.5" width="16" height="10" viewBox="0 0 16 10"><path d="M2 8l6-6 6 6" fill="none" stroke="#fff" strokeWidth="2" /></svg>
        <svg className="ml-px" width="24" height="24" viewBox="0 0 24 24">
          <path d="M3 9q3-7 10-7 5 0 8 4M21 2v5h-5M3 21v-5h5M3 17q3 5 8 5" fill="none" stroke="#eee" strokeWidth="1.400" />
          <circle cx="17.500" cy="17" r="5.200" fill="#f00" />
        </svg>
        <svg className="ml-0.5" width="24" height="24" viewBox="0 0 24 24">
          <path d="M5 17q-4 0-4-5t5-5q2-4 6-4t6 5l3 5-8 4z" fill="#aaa" />
          <path d="M5 18q-4 0-4-5t5-5q4 0 6 4l2 6z" fill="#f0eeec" />
          <circle cx="16" cy="16" r="6" fill="#4cc2f8" />
          <path d="M16 15v5M16 12v1.800" stroke="#10304a" strokeWidth="1.800" />
        </svg>
        <div className="flex flex-col items-center pr-[14px] text-[15px] leading-5">
          <T w={28} className="h-5">POR</T>
          <T w={33}>PTB2</T>
        </div>
        <svg width="22" height="20" viewBox="0 0 22 20" fill="none" stroke="#fff" strokeWidth="1.600">
          <path d="M1 8q10-9 20 0M4 11.500q7-6 14 0M7 15q4-3.500 8 0" /><circle cx="11" cy="17" r="1.500" fill="#fff" />
        </svg>
        <svg width="22" height="20" viewBox="0 0 22 20" fill="none" stroke="#fff" strokeWidth="1.400">
          <path d="M1 7h4l5-4v14l-5-4H1zM13 7q2 3 0 6M16 4.500q4 5.500 0 11M18.500 2q5 8 0 16" />
        </svg>
        <svg width="22" height="20" viewBox="0 0 22 20" fill="none" stroke="#fff" strokeWidth="1.600">
          <path d="M9 5h8q2 0 2 2v8q0 2-2 2H4q-2 0-2-2v-4M20.500 9v4" /><path d="M4 11h6v4H4zM6 0L2 6h5L4 10" fill="#fff" stroke="none" /><path d="M5 1L3 6h4L4 11" />
        </svg>
        <div className="flex flex-col items-end pr-0.5 pt-px text-[15px] leading-5">
          <T w={36} className="h-5">12:04</T>
          <T w={77}>25/03/2025</T>
        </div>
        <svg className="ml-[5px]" width="20" height="22" viewBox="0 0 20 22" fill="none" stroke="#fff" strokeWidth="1.500">
          <path d="M2 16l2-3V8q0-6 6-6t6 6v5l2 3zM7 17q0 3 3 3t3-3" />
        </svg>
      </div>
    </div>
  );
}

const menus: [string, string, string, number, string][] = [
  ['', 'C', 'adastros', 65, 'mr-[17px]'], ['', 'M', 'ovimentos', 84, 'mr-[18px]'], ['C', 'o', 'nsultas', 65, 'mr-[17px]'], ['', 'R', 'elatórios', 65, 'mr-[18px]'],
  ['', 'I', 'ntegração', 69, 'mr-[18px]'], ['', 'U', 'tilitários', 63, 'mr-[17px]'], ['', 'J', 'anelas', 47, 'mr-4'], ['', 'S', 'air', 24, ''],
];
const tools = ['people', 'folder', 'barcode', 'printer', 'pen', 'bag', 'cash', 'tools', 'lock', 'exit', 'fribal'];

export default function App() {
  return (
    <div className="flex h-[1080px] w-[1920px] flex-col overflow-hidden bg-white font-['Liberation_Sans',sans-serif] text-[15px] leading-5 text-black">
      <div className="flex h-[29px] shrink-0 items-center bg-gradient-to-r from-[#f8eff8] to-[#f9f0f0] pl-[3px]">
        <Drumstick className="h-[22px] w-[18px]" />
        <T w={1032} className="ml-[7px] font-['Noto_Sans']">SgeFribal 1.30Z Update: 3606 [ 999 - COMCARNE COMERCIAL DE CARNE LTDA ]  Usuário: 959 - LUCAS FRANCISS  25/03/25 12:04:10 Servidor: 192.168.0.248</T>
        <svg className="ml-auto" width="154" height="20" viewBox="0 0 154 20" fill="none" stroke="#111" strokeWidth="1.300">
          <path d="M0 10h12M117 4l12 12M129 4l-12 12" />
          <rect x="58.500" y="7" width="9" height="9" rx="1.500" />
          <path d="M61 4.500h6q3 0 3 3v6" />
        </svg>
      </div>
      <div className="flex h-[25px] shrink-0 items-center pb-0.5 pl-[9px] font-['Noto_Sans']">
        {menus.map(([a, u, b, w, m]) => (
          <T key={b} w={w} className={m}>{a}<U>{u}</U>{b}</T>
        ))}
      </div>
      <div className="flex h-[58px] shrink-0 items-center border-b-2 border-[#808080] bg-[#c0c0c0] pl-2.5">
        <div className="grid grid-cols-[62px_58px_68px_58px_68px_62px_58px_68px_58px_60px_64px] items-center">
          {tools.map((t) => <TopIcon key={t} name={t} />)}
        </div>
        <div className="mr-[5px] ml-auto w-[299px] text-[#1818f8]">
          <T w={52} className="h-[19px] leading-[18px]"><U>E</U>mpresa</T>
          <div className="flex h-[27px] items-center border-2 border-[#1818ff] bg-white pl-1 text-[#222]">
            <T w={262} className="font-['Liberation_Mono'] text-[13px]">999 - COMCARNE MATRIZ SAO LUIS</T>
            <div className="ml-auto flex h-full w-4 items-center justify-center border-l-2 border-[#1818ff] bg-[#dcdccc]">
              <svg width="6" height="4" viewBox="0 0 6 4"><path d="M0 0h6L3 4z" /></svg>
            </div>
          </div>
        </div>
      </div>
      <div className="-mt-px min-h-0 flex-1 border-r-2 border-l-2 border-r-[#e8e8e8] border-l-[#808080]">
        <ChildWindow />
      </div>
      <div className="grid h-[30px] shrink-0 grid-cols-[212px_500px_1fr] items-center border-t-3 border-b border-t-[#e6e6e6] border-b-[#555] bg-[#c0c0c0] pt-0.5 font-bold">
        <div className="border-r border-[#dadada] pl-2"><T w={194}>Usuário: LUCAS FRANCISS</T></div>
        <div className="flex justify-center border-r border-[#dadada] pl-0.5"><T w={18}>00</T></div>
        <div className="pl-[335px]"><T w={540}>25 de março de 2025 - 12:04:10 PC: LAPTOP-5KMD1QLF IP: 192.168.99.44</T></div>
      </div>
      <Taskbar />
    </div>
  );
}
